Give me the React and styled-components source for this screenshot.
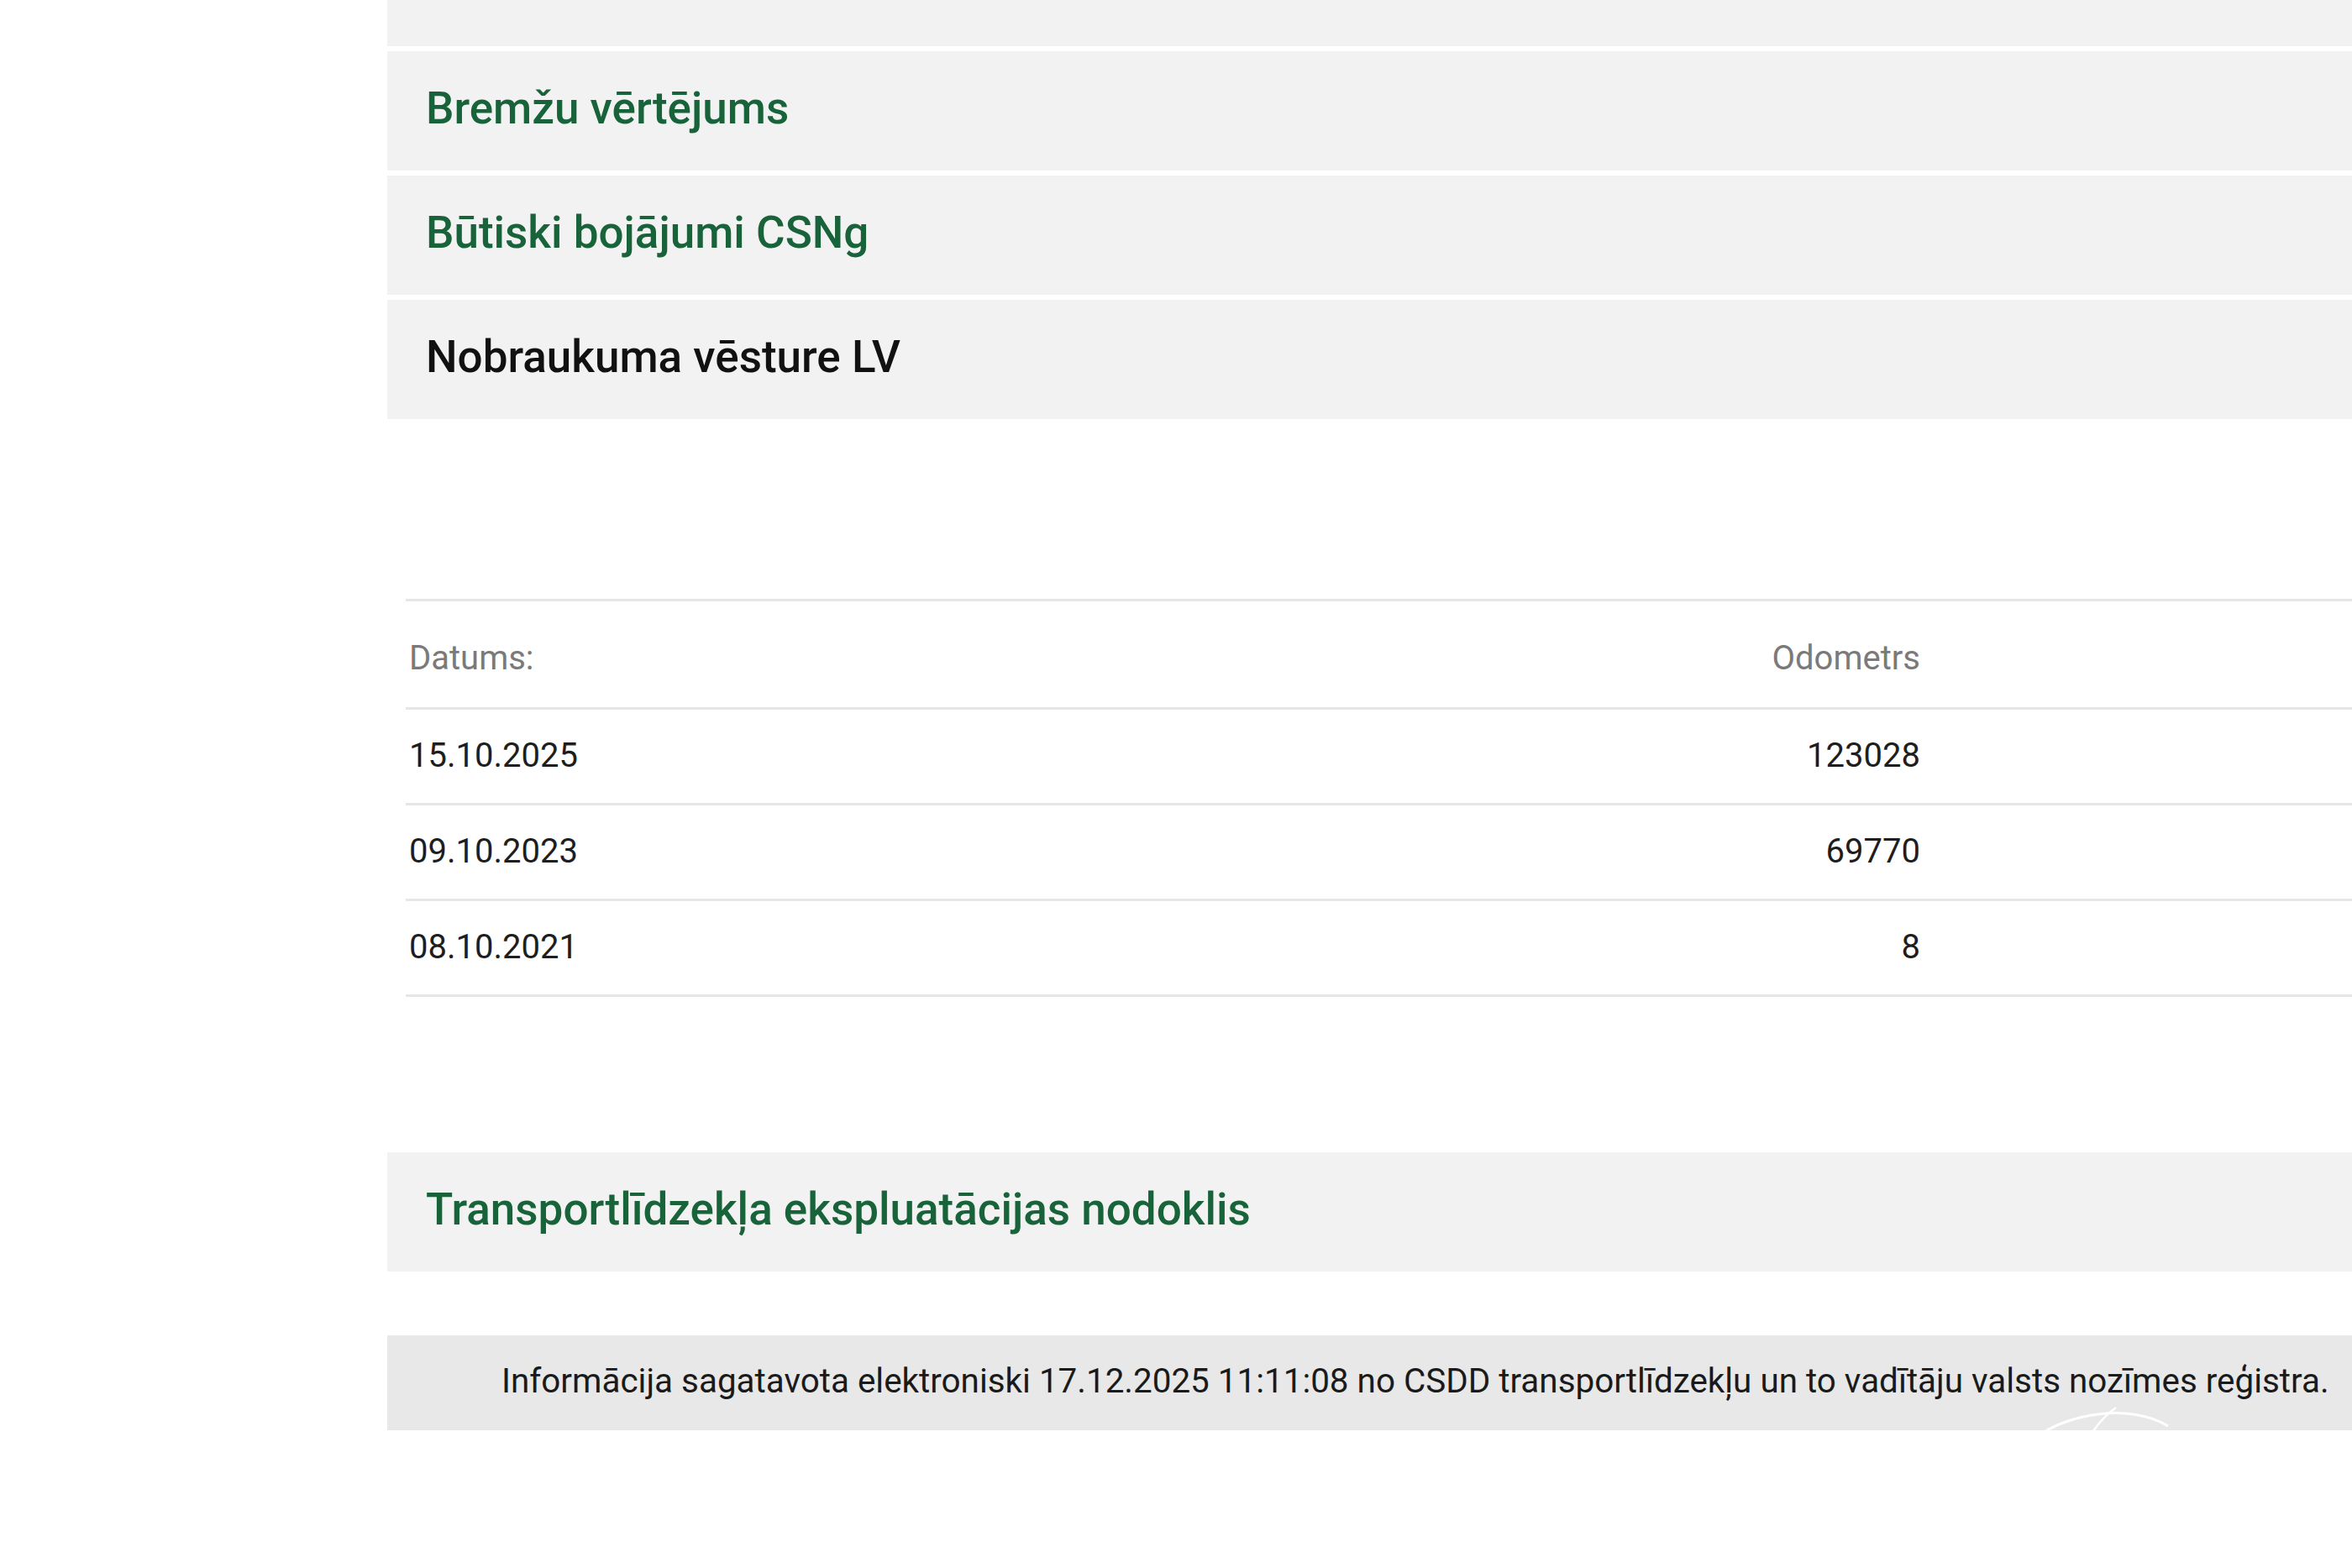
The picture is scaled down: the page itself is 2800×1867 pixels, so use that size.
import React from "react";
import styled, { createGlobalStyle } from "styled-components";

const Global = createGlobalStyle`
  html, body {
    margin: 0;
    padding: 0;
    background: #ffffff;
    overflow: hidden;
  }
  body {
    font-family: Roboto, "Noto Sans", "Liberation Sans", Arial, sans-serif;
    color: #222;
  }
`;

const Page = styled.div`
  width: 2800px;
  height: 1867px;
  overflow: hidden;
  padding-left: 461px;
  box-sizing: border-box;
`;

const Column = styled.div`
  display: flex;
  flex-direction: column;
  margin-top: -87px;
`;

const Accordion = styled.div`
  display: flex;
  flex-direction: column;
  gap: 6px;
`;

const Panel = styled.div`
  height: 142px;
  background: #f2f2f2;
  display: flex;
  align-items: center;
  padding-left: 46px;
  padding-bottom: 6px;
  box-sizing: border-box;
  margin-top: ${(p) => p.$mt || 0}px;
`;

const PanelTitle = styled.h3`
  margin: 0;
  font-family: Roboto, "Noto Sans", sans-serif;
  font-weight: 500;
  font-size: 53px;
  line-height: 1;
  color: ${(p) => (p.$active ? "#111111" : "#18633a")};
`;

const Table = styled.div`
  margin-top: 214px;
  margin-left: 22px;
  border-top: 3px solid #e6e6e6;
  display: flex;
  flex-direction: column;
`;

const Row = styled.div`
  display: flex;
  align-items: center;
  height: ${(p) => (p.$head ? 129 : 114)}px;
  border-bottom: 3px solid #e6e6e6;
  padding-right: 514px;
  padding-left: 4px;
  padding-top: ${(p) => (p.$head ? 8 : 0)}px;
  padding-bottom: ${(p) => (p.$head ? 0 : 2)}px;
  font-size: 40px;
  color: ${(p) => (p.$head ? "#7a7a7a" : "#1e1e1e")};
  box-sizing: border-box;
`;

const DateCell = styled.div`
  flex: 1;
`;

const ValueCell = styled.div`
  text-align: right;
`;

const Footer = styled.div`
  position: relative;
  margin-top: 76px;
  height: 113px;
  background: #e8e8e8;
  display: flex;
  align-items: center;
  padding-left: 136px;
  padding-bottom: 4px;
  box-sizing: border-box;
  overflow: hidden;
  font-size: 40.4px;
  color: #1a1a1a;
  white-space: nowrap;
`;

const Watermark = styled.svg`
  position: absolute;
  left: 1964px;
  top: 82px;
  width: 160px;
  height: 40px;
`;

const rows = [
  ["15.10.2025", "123028"],
  ["09.10.2023", "69770"],
  ["08.10.2021", "8"],
];

export default function App() {
  return (
    <>
      <Global />
      <Page>
        <Column>
          <Accordion>
            <Panel>
              <PanelTitle>&nbsp;</PanelTitle>
            </Panel>
            <Panel>
              <PanelTitle>Bremžu vērtējums</PanelTitle>
            </Panel>
            <Panel>
              <PanelTitle>Būtiski bojājumi CSNg</PanelTitle>
            </Panel>
            <Panel>
              <PanelTitle $active>Nobraukuma vēsture LV</PanelTitle>
            </Panel>
          </Accordion>

          <Table>
            <Row $head>
              <DateCell>Datums:</DateCell>
              <ValueCell>Odometrs</ValueCell>
            </Row>
            {rows.map(([d, v]) => (
              <Row key={d}>
                <DateCell>{d}</DateCell>
                <ValueCell>{v}</ValueCell>
              </Row>
            ))}
          </Table>

          <Panel $mt={185}>
            <PanelTitle>Transportlīdzekļa ekspluatācijas nodoklis</PanelTitle>
          </Panel>

          <Footer>
            Informācija sagatavota elektroniski 17.12.2025 11:11:08 no CSDD
            transportlīdzekļu un to vadītāju valsts nozīmes reģistra.
            <Watermark viewBox="0 0 160 40">
              <path
                d="M2 38 C 34 12, 112 -2, 156 26"
                fill="none"
                stroke="#ffffff"
                strokeWidth="3"
              />
              <path
                d="M62 40 C 70 26, 80 14, 94 4"
                fill="none"
                stroke="#ffffff"
                strokeWidth="2.5"
              />
            </Watermark>
          </Footer>
        </Column>
      </Page>
    </>
  );
}
